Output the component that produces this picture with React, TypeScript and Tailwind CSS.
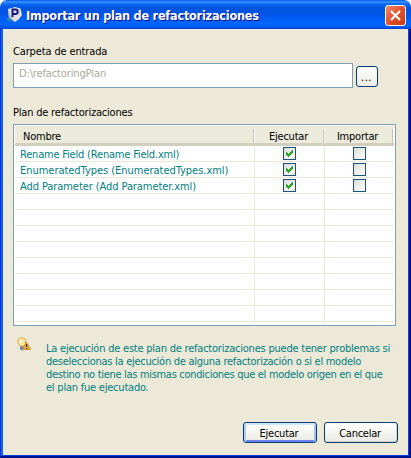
import type { ReactNode } from 'react';

const rows = [
  { name: 'Rename Field (Rename Field.xml)', cls: 'tracking-[-0.19px]' },
  { name: 'EnumeratedTypes (EnumeratedTypes.xml)', cls: 'tracking-[-0.03px]' },
  { name: 'Add Parameter (Add Parameter.xml)', cls: 'tracking-[-0.08px]' },
];

const slots = Array.from({ length: 11 }, (_, i) => rows[i]);

function Checkbox({ checked }: { checked?: boolean }) {
  return (
    <span className="block h-[13px] w-[13px] border border-[#1c5180] bg-linear-to-br from-[#dcdcd7] to-white">
      {checked && (
        <svg width="11" height="11" viewBox="0 0 11 11" shapeRendering="crispEdges" className="block">
          <path d="M2 4h1v1h1v1h1v-1h1v-1h1v-1h1v-1h1v3h-1v1h-1v1h-1v1h-1v1h-1v-1h-1v-1h-1z" fill="#21a121" />
        </svg>
      )}
    </span>
  );
}

function Button({ primary, children }: { primary?: boolean; children: ReactNode }) {
  return (
    <button
      className={`flex h-[21px] w-[74px] items-center justify-center rounded-[3px] border border-[#003c74] bg-linear-to-b from-white via-[#f5f5f1] to-[#eaeae3] pt-px pr-[2px] tracking-[-0.25px] ${
        primary
          ? 'shadow-[inset_0_2px_0_#cee7ff,inset_2px_0_0_#b4cdf5,inset_-2px_0_0_#a4c0ee,inset_0_-2px_0_#6982ee]'
          : 'shadow-[inset_-1px_-1px_0_#d6d0c5]'
      }`}
    >
      {children}
    </button>
  );
}

function AppIcon() {
  return (
    <svg width="16" height="16" viewBox="0 0 16 16" className="block shrink-0">
      <path d="M2 2L9 0l5.500 1.500 1.500 6.500-3 4-4 3L3 11z" fill="#dfe0e6" />
      <path d="M2 2L4.500 9l4.500 6-6-4z" fill="#b4b8c8" />
      <path d="M6.500 10V2.500h3a2.200 2.200 0 0 1 0 4.400h-3" fill="none" stroke="#18187c" strokeWidth="2" />
      <path d="M0 11l3 1 2-1-1 4-2-1z" fill="#2c86a8" />
    </svg>
  );
}

function HintIcon() {
  return (
    <svg width="15" height="15" viewBox="0 0 15 15" className="block shrink-0">
      <path d="M3 8.500h4v4l-1 1H4.500L3 12z" fill="#6d87b5" />
      <path d="M3 9L1 6V3l2-2h4l1.500 2v3L7 9z" fill="#ffe9a0" stroke="#e9a845" />
      <path d="M3 3h2v3H3z" fill="#fffbe6" />
      <path d="M9.500 5.500L6.300 12.300h6.900z" fill="#f5b54a" stroke="#e09a38" strokeWidth="1.500" strokeLinejoin="round" />
      <path d="M9 7h1.200v3H9zM9 11h1.200v1H9z" fill="#5a3200" />
    </svg>
  );
}

function HeaderRule() {
  return <div className="mt-[3px] h-[14px] w-[2px] shrink-0 border-l border-[#c7c5b2] bg-white" />;
}

export default function App() {
  return (
    <div className="flex h-[458px] w-[411px] flex-col overflow-hidden bg-white font-['DejaVu_Sans_Condensed','DejaVu_Sans',sans-serif] text-[11px] leading-[13px] text-black">
      <header className="flex h-[29px] shrink-0 items-center rounded-t-[7px] bg-[linear-gradient(180deg,#0058e6_0%,#3a93ff_7%,#0a6af0_14%,#0055e0_26%,#0054e3_45%,#005ff8_65%,#0066ff_85%,#0054e5_95%,#003dd7_100%)] pr-[5px] pl-[6px]">
        <div className="mt-px shrink-0">
          <AppIcon />
        </div>
        <h1 className="ml-[4px] grow pt-[3px] text-[12.5px] leading-[16px] font-bold tracking-[-0.2px] whitespace-nowrap text-white [text-shadow:1px_1px_0_#0f1089]">
          Importar un plan de refactorizaciones
        </h1>
        <button className="mt-[2px] flex h-[21px] w-[21px] shrink-0 items-center justify-center rounded-[3px] border border-white bg-linear-to-br from-[#f0866a] via-[#e3502c] to-[#c83a10]">
          <svg width="11" height="11" viewBox="0 0 11 11" className="shrink-0">
            <path d="M1 1l9 9M10 1l-9 9" stroke="#fff" strokeWidth="2.200" />
          </svg>
        </button>
      </header>

      <div className="flex grow border-r-2 border-b-2 border-l border-r-[#00138c] border-b-[#00138c] border-l-[#0831d9]">
        <main className="flex grow flex-col border-r border-b border-l-2 border-r-[#0845e0] border-b-[#0845e0] border-l-[#0f62ee] bg-[#ece9d8] px-[10px] pt-[16px]">
          <label className="h-[18px] tracking-[-0.14px] whitespace-nowrap">Carpeta de entrada</label>
          <div className="flex h-[25px] gap-[3px]">
            <div className="h-[25px] w-[340px] border border-[#7f9db9] bg-white pt-[3px] pl-[5px] tracking-[-0.14px] text-[#aca899]">
              D:\refactoringPlan
            </div>
            <button className="mt-[3px] flex h-[21px] w-[22px] items-center justify-center rounded-[3px] border border-[#003c74] bg-linear-to-b from-white to-[#ecebe5] pt-px pr-px tracking-[0.5px]">
              ...
            </button>
          </div>
          <label className="mt-[18px] h-[18px] tracking-[-0.2px] whitespace-nowrap">Plan de refactorizaciones</label>

          <section className="flex h-[202px] w-[383px] flex-col border border-[#7f9db9] bg-white p-px">
            <div className="flex h-[20px] shrink-0 border-b-[3px] border-[#d3cfbf] bg-[#ebeadb] tracking-[-0.22px]">
              <div className="flex w-[238px] items-center pt-[3px] pl-[8px]">Nombre</div>
              <HeaderRule />
              <div className="flex w-[68px] items-center justify-center pt-[3px] pr-px">Ejecutar</div>
              <HeaderRule />
              <div className="flex w-[67px] items-center justify-center pt-[3px] pr-[2px]">Importar</div>
              <HeaderRule />
            </div>
            {slots.map((row, i) => (
              <div key={i} className="flex h-[16px] shrink-0 border-b border-[#ece9d8]">
                <div className="w-[240px] shrink-0 border-r border-[#ece9d8] pt-[2px] pl-[5px] whitespace-nowrap text-[#008080]">
                  {row && <span className={`block ${row.cls}`}>{row.name}</span>}
                </div>
                <div className="flex w-[70px] shrink-0 justify-center border-r border-[#ece9d8] pt-px">
                  {row && <Checkbox checked />}
                </div>
                <div className="flex w-[69px] shrink-0 justify-center pt-px">{row && <Checkbox />}</div>
              </div>
            ))}
            <div className="flex h-[2px] shrink-0">
              <div className="w-[240px] border-r border-[#ece9d8]" />
              <div className="w-[70px] border-r border-[#ece9d8]" />
            </div>
          </section>

          <div className="mt-[11px] flex pl-[4px]">
            <HintIcon />
            <p className="mt-[5px] ml-[14px] whitespace-nowrap text-[#008080]">
              <span className="block tracking-[-0.22px]">La ejecución de este plan de refactorizaciones puede tener problemas si</span>
              <span className="block tracking-[-0.27px]">deseleccionas la ejecución de alguna refactorización o si el modelo</span>
              <span className="block tracking-[-0.31px]">destino no tiene las mismas condiciones que el modelo origen en el que</span>
              <span className="block tracking-[-0.22px]">el plan fue ejecutado.</span>
            </p>
          </div>

          <footer className="mt-auto mb-[12px] flex justify-end gap-[7px]">
            <Button primary>Ejecutar</Button>
            <Button>Cancelar</Button>
          </footer>
        </main>
      </div>
    </div>
  );
}
